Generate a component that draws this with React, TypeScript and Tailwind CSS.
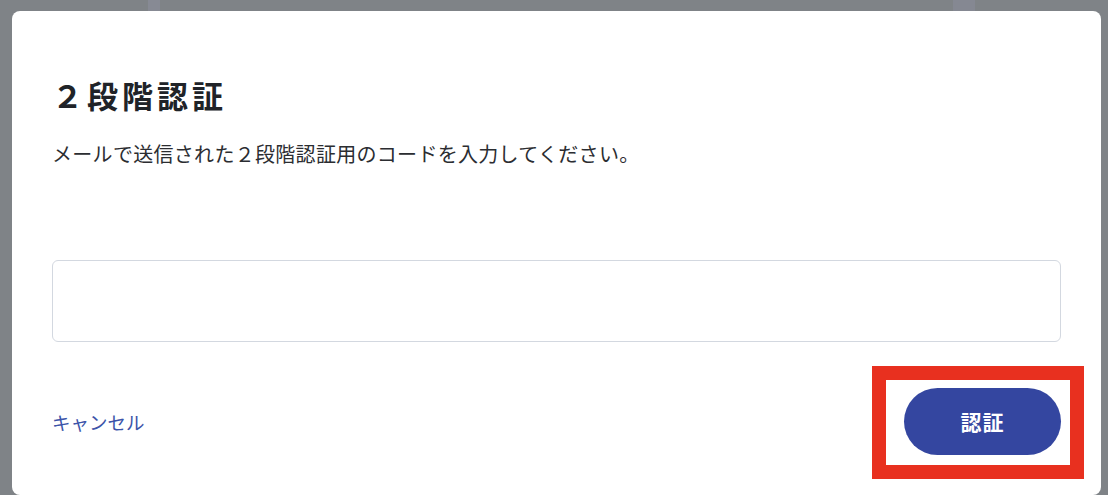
import React from "react";

export default function App() {
  return (
    <div
      className="relative w-[1108px] h-[495px] overflow-hidden bg-[#7f8387]"
      style={{ fontFamily: '"Noto Sans CJK JP", "Noto Sans", sans-serif' }}
    >
      {/* dimmed page bands behind the overlay */}
      <div className="absolute left-[148px] top-0 w-[12px] h-[12px] bg-[#878a94]" />
      <div className="absolute left-[953px] top-0 w-[22px] h-[12px] bg-[#858892]" />

      <div className="absolute left-[12px] top-[11px] w-[1089px] h-[484px] rounded-[8px] bg-white px-[40px] pt-[61px] flex flex-col">
        <h1 className="text-[31px] leading-[46px] font-bold tracking-[4px] text-[#202328]">
          ２段階認証
        </h1>
        <p className="mt-[21px] text-[20px] leading-[30px] tracking-[0.3px] text-[#2b2d31]">
          メールで送信された２段階認証用のコードを入力してください。
        </p>
        <input
          className="mt-[91px] h-[82px] w-full rounded-[6px] border border-[#d3d8e0] outline-none px-4 text-[18px]"
          type="text"
        />
        <div className="mt-[46px] flex items-center justify-between">
          <span className="text-[18.5px] leading-[28px] text-[#3c54a9]">キャンセル</span>
          <div className="relative">
            <button className="w-[157px] h-[67px] rounded-full bg-[#3446a0] text-white text-[21px] font-bold tracking-[1px]">
              認証
            </button>
            <div className="absolute left-[-32px] right-[-23px] top-[-22px] bottom-[-24px] border-[14px] border-[#e8301f] pointer-events-none" />
          </div>
        </div>
      </div>
    </div>
  );
}
